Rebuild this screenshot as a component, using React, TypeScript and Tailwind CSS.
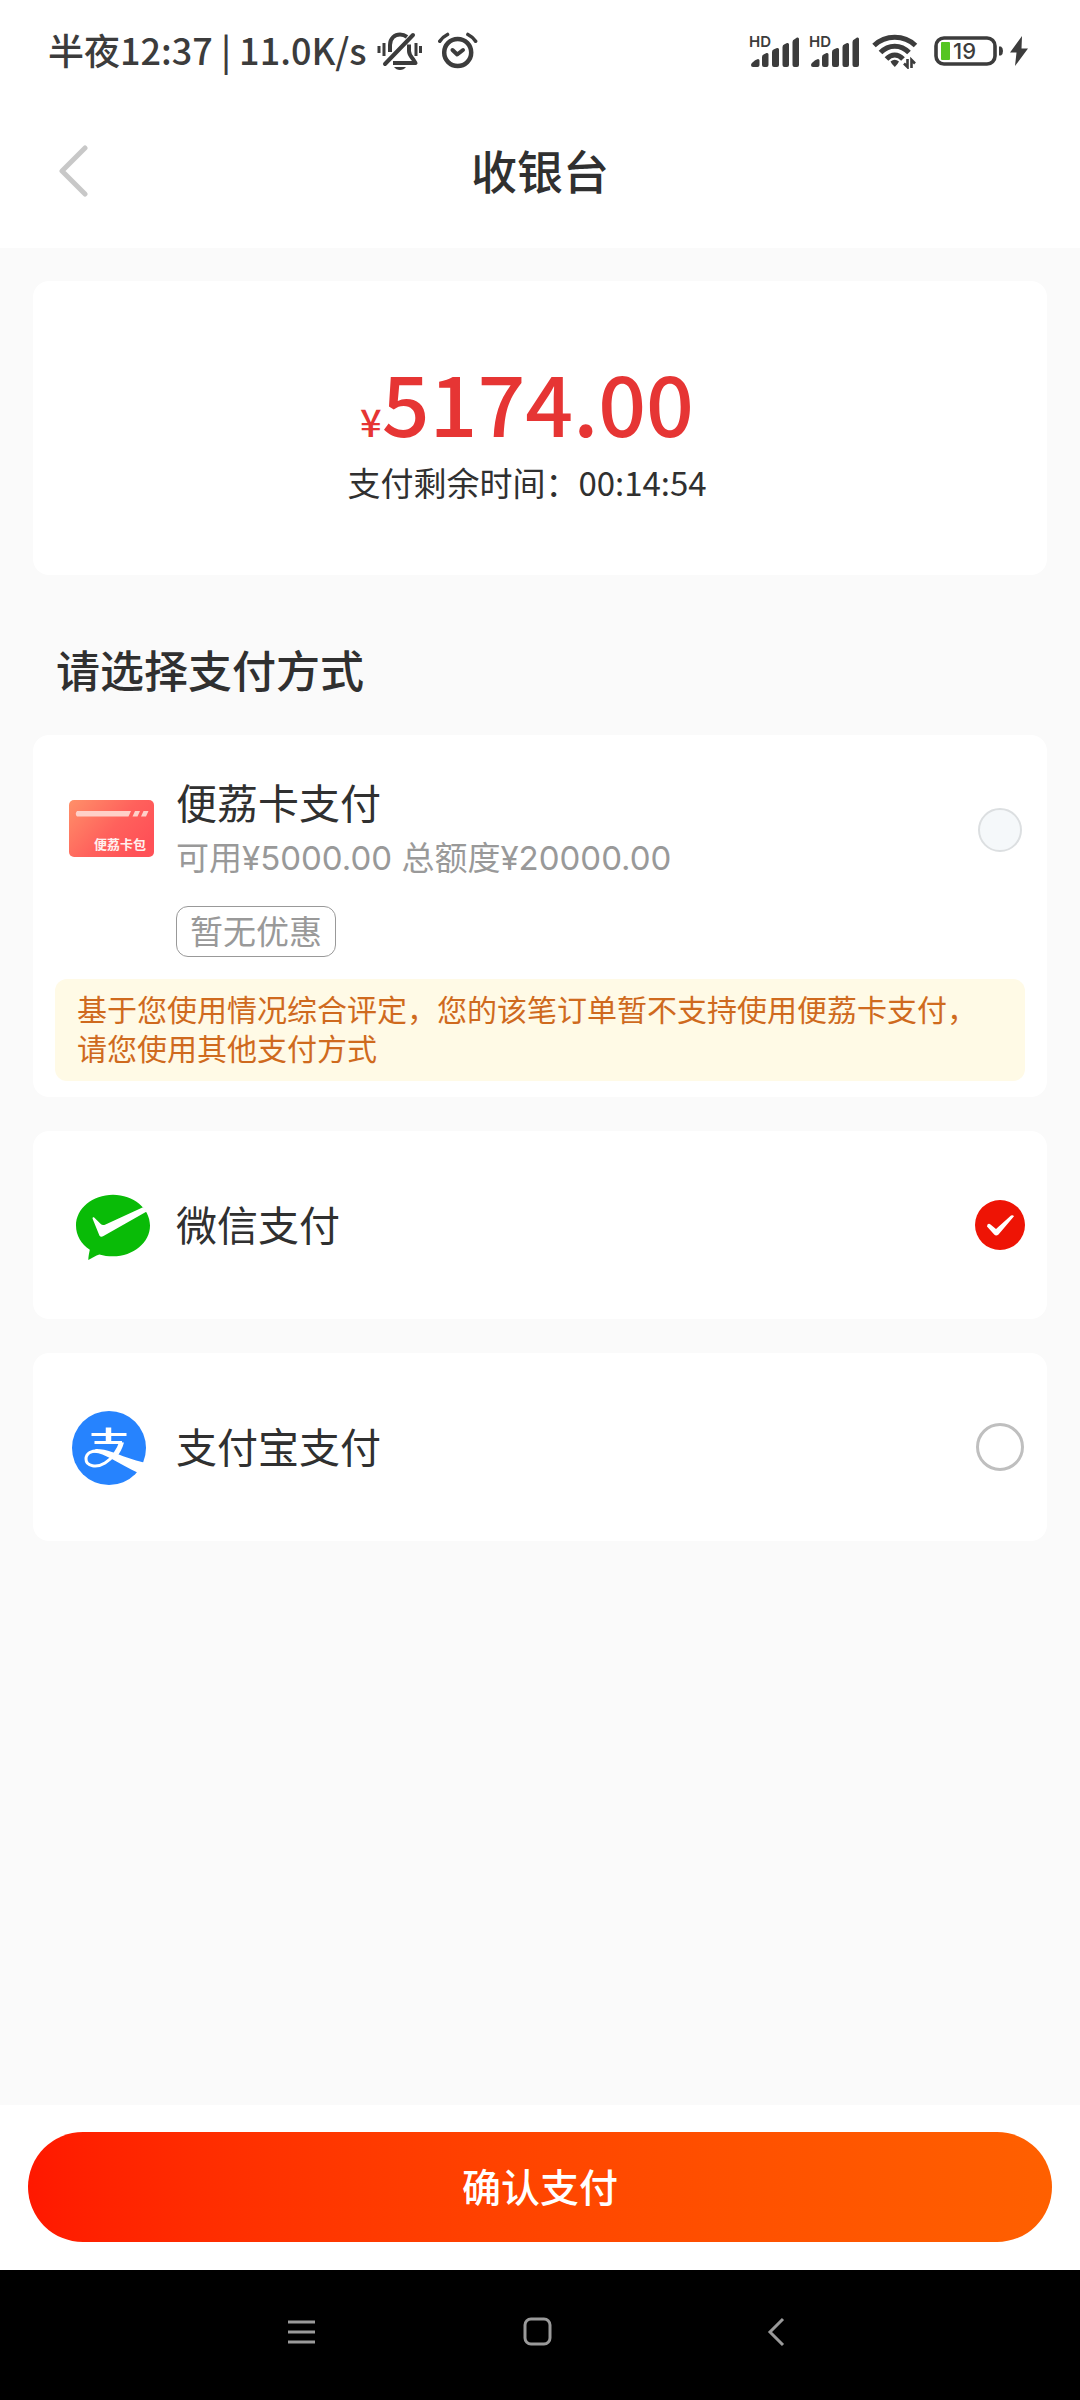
import { useState } from "react";
import type { ReactNode } from "react";

const BellOffIcon = () => (
  <svg width="45" height="38" viewBox="0 0 45 38" fill="none" stroke="currentColor" strokeWidth="4" aria-hidden="true">
    <path d="M13 20V13C13 6 18 2.5 23 2.5c3 0 5 .8 7 2.3" />
    <path d="M32 12.5V19c0 3.500 2 5.500 4 8l2.500 4H16" strokeLinejoin="round" />
    <path d="M8 32 36 3" strokeLinecap="round" />
    <path d="M2 14v7M7 11v13M39 11v13M43.500 14v7" strokeWidth="3" />
    <path d="M17 35h12c-1.500 2-3.500 3-6 3s-4.500-1-6-3z" fill="currentColor" stroke="none" />
  </svg>
);

const AlarmIcon = () => (
  <svg width="40" height="38" viewBox="0 0 40 38" fill="none" stroke="currentColor" strokeLinecap="round" aria-hidden="true">
    <circle cx="19.700" cy="20.500" r="13.500" strokeWidth="4.500" />
    <path d="m14.500 18 4.700 4.500 5.800-4.500" strokeWidth="4" strokeLinejoin="round" />
    <path d="M1.800 9.200C4 6 6.500 4 9.500 2.500M29.900 2.500c3 1.500 5.500 3.500 7.700 6.700" strokeWidth="3.600" />
  </svg>
);

const SignalIcon = () => (
  <svg width="50" height="34" viewBox="0 0 50 34" className="overflow-visible" fill="currentColor" aria-hidden="true">
    <text x="0" y="13" fontFamily="Inter, sans-serif" fontSize="15" fontWeight="600">
      HD
    </text>
    <path d="M2 31c0-2 4-5 7-6q1.500 0 1.500 1.500V31q0 2-2 2H4q-2 0-2-2z" />
    <path d="M13 23q0-2 2-2.800l2.500-1.200q2-.5 2 1.500V31q0 2-2 2H15q-2 0-2-2z" />
    <path d="M23 18q0-2 2-2.800l3-1.200q2-.5 2 1.500V31q0 2-2 2h-3q-2 0-2-2z" />
    <path d="M33.500 13q0-2 2-2.800l2.500-1.200q2-.5 2 1.500V31q0 2-2 2h-2.500q-2 0-2-2z" />
    <path d="M43.500 8q0-2 2-2.800L48 3.500q2-.5 2 1.500V31q0 2-2 2h-2.500q-2 0-2-2z" />
  </svg>
);

const WifiIcon = () => (
  <svg width="46" height="36" viewBox="0 0 46 36" fill="none" stroke="currentColor" strokeWidth="5" aria-hidden="true">
    <path d="M2 12.500C13.500 1.500 32 1.500 43.500 12.500" />
    <path d="M8.500 19.500c8-8.500 20.500-8.500 28.500 0" />
    <path d="M14.500 26c5-5.500 11.500-5.500 16.500 0" />
    <path d="M18.500 28.500q4.200-3.500 8.500 0-1.500 3-4.200 5.500-3-2.500-4.300-5.500z" fill="currentColor" stroke="none" />
    <path d="M35.500 26v8l-3.500-3.500M39.500 35v-8l3.500 3.500" strokeWidth="2.600" />
  </svg>
);

const BatteryIcon = () => (
  <svg width="70" height="30" viewBox="0 0 70 30" aria-hidden="true">
    <rect x="2" y="2" width="59" height="26" rx="8" fill="none" stroke="currentColor" strokeWidth="3.600" />
    <rect x="7" y="6" width="9" height="18" rx="1" fill="#55c522" />
    <text x="19" y="23" fill="currentColor" fontFamily="Inter, sans-serif" fontSize="22" fontWeight="500">
      19
    </text>
    <path d="M65 10.500h2q2 1 2 4.500t-2 4.500h-2z" fill="currentColor" />
  </svg>
);

const BoltIcon = () => (
  <svg width="18" height="30" viewBox="0 0 18 30" fill="currentColor" aria-hidden="true">
    <path d="M12 0 0 16.500h6.500L5 30 18 12.500h-6.500z" />
  </svg>
);

const StatusBar = () => (
  <div className="flex h-[102px] items-center justify-between pr-[52px] pl-12 text-[#3c3c3c]">
    <div className="flex items-center">
      <span className="pb-1 text-[36px] leading-[44px] font-medium whitespace-nowrap">
        半夜12:37 | 11.0K/s
      </span>
      <span className="ml-[10px] flex items-center gap-4">
        <BellOffIcon />
        <AlarmIcon />
      </span>
    </div>
    <div className="flex items-center">
      <div className="flex gap-[10px]">
        <SignalIcon />
        <SignalIcon />
      </div>
      <div className="ml-[13px] flex items-center gap-4">
        <WifiIcon />
        <div className="flex items-center gap-[6px]">
          <BatteryIcon />
          <BoltIcon />
        </div>
      </div>
    </div>
  </div>
);

const Header = () => (
  <header className="grid h-[138px] grid-cols-[1fr_auto_1fr] items-center px-[58px]">
    <button type="button" aria-label="返回" className="justify-self-start">
      <svg width="30" height="52" viewBox="0 0 30 52" fill="none" stroke="#c8c8c8" strokeWidth="5" strokeLinecap="round" strokeLinejoin="round">
        <path d="M27 3 4 26l23 23" />
      </svg>
    </button>
    <h1 className="pb-1 text-[46px] leading-[60px] font-medium">收银台</h1>
  </header>
);

const CardLogo = () => (
  <svg width="86" height="86" viewBox="0 0 86 86" aria-hidden="true">
    <defs>
      <linearGradient id="card" x1="0" y1="0" x2="1" y2="0.600">
        <stop offset="0" stopColor="#ff9069" />
        <stop offset="0.600" stopColor="#ff615c" />
        <stop offset="1" stopColor="#ff5157" />
      </linearGradient>
    </defs>
    <rect y="13" width="85" height="57" rx="5" fill="url(#card)" />
    <path d="M8 24h54L59.500 29.500H8q-2.500-2.700 0-5.500zM66 24h5L68.500 29.500h-5zM74.500 24h5L77 29.500h-5z" fill="#ffd0c8" />
    <text x="25" y="62" fill="#fff0ee" fontFamily="'Noto Sans CJK SC', sans-serif" fontSize="13" fontWeight="700">
      便荔卡包
    </text>
  </svg>
);

const WechatLogo = () => (
  <svg width="86" height="86" viewBox="0 0 86 86" aria-hidden="true">
    <path
      d="M44 12.700c20.500 0 37 13.800 37 30.800s-16.500 30.800-37 30.800c-4.800 0-9.400-.6-13.600-1.900-3.900 1.300-7.400 3.300-11.100 5.600.1-3.600.8-6.800 1.500-10.200C12.200 62.200 7 53.500 7 43.500c0-17 16.500-30.800 37-30.800z"
      fill="#09bb07"
    />
    <path
      d="M23.700 37c-.5-1.800.5-2 1.500-1.500l6.300 6.300c1.500 1.400 3 1.500 5 .6L74 25.300c1.500 1.200 2.600 2.500 3.700 4.200L34.500 54c-1.800 1-3.300 1-4.200-.8z"
      fill="#fff"
    />
  </svg>
);

const AlipayLogo = () => (
  <svg width="86" height="86" viewBox="0 0 86 86" fill="none" stroke="#fff" aria-hidden="true">
    <circle cx="40" cy="44" r="37" fill="#2683fe" stroke="none" />
    <path d="M22.500 30.500h35M25.500 38.500H53" strokeWidth="3" />
    <path d="M39.500 23.500v15" strokeWidth="5.500" />
    <path d="M52 37.500c-3 9-9 17-16 21.500-8 5-19 3.500-19-4 0-6 6-8.500 12-8.300" strokeWidth="3" />
    <path d="M27 45c11 0 21 5 31 8.500 6 2.200 12 4 19 5.500l-6.500 10.500C60 65 50 58.500 41 54 35 51 29 47.500 22 49z" fill="#fff" stroke="none" />
    <path d="M50.500 38.500h4.500c-1.500 6-4.500 11-7.500 15l-3.500-2c3-4 5.500-8.500 6.500-13z" fill="#fff" stroke="none" />
  </svg>
);

type MethodProps = {
  id: string;
  name: string;
  logo: ReactNode;
  selected: boolean;
  disabled?: boolean;
  detail?: string;
  onSelect?: () => void;
};

const Method = ({ id, name, logo, selected, disabled, detail, onSelect }: MethodProps) => (
  <div className="flex items-center gap-[21px]">
    {logo}
    <div className="flex-1 pb-1">
      <label htmlFor={id} className="block text-[41px] leading-[60px]">
        {name}
      </label>
      {detail && (
        <p className="font-['Inter','Noto_Sans_CJK_SC',sans-serif] text-[33px] leading-[54px] text-[#999]">
          {detail}
        </p>
      )}
    </div>
    <div className="relative flex w-[50px] items-center justify-center">
      <input
        id={id}
        type="radio"
        name="method"
        checked={selected}
        disabled={disabled}
        onChange={onSelect}
        className="size-12 appearance-none rounded-full border-3 border-[#bfbfbf] bg-white checked:size-[50px] checked:border-0 checked:bg-[#ee1405] disabled:size-11 disabled:border-2 disabled:border-[#dcdfe1] disabled:bg-[#f5f8fa]"
      />
      {selected && (
        <svg className="pointer-events-none absolute" width="28" height="24" viewBox="0 0 28 24" aria-hidden="true">
          <path d="M1.500 11.500q1.500-1.500 3 0l5.500 4.500L25 2.500q2-1 3 .8L12.500 21.500q-2.500 2-4.300 0L1 13.500z" fill="#fff" />
        </svg>
      )}
    </div>
  </div>
);

const others = [
  { id: "wechat", name: "微信支付", logo: <WechatLogo /> },
  { id: "alipay", name: "支付宝支付", logo: <AlipayLogo /> },
];

const SystemNav = () => (
  <nav className="grid grid-cols-3 bg-black px-[182px] py-[47px] text-[#9a9a9a]">
    <button type="button" aria-label="最近任务" className="justify-self-center">
      <svg width="36" height="36" viewBox="0 0 36 36" stroke="currentColor" strokeWidth="3">
        <path d="M5 5h27M5 15h27M5 25h27" />
      </svg>
    </button>
    <button type="button" aria-label="主屏幕" className="justify-self-center">
      <svg width="36" height="36" viewBox="0 0 36 36" fill="none" stroke="currentColor" strokeWidth="3">
        <rect x="3" y="2" width="25" height="25" rx="6" />
      </svg>
    </button>
    <button type="button" aria-label="返回" className="justify-self-center">
      <svg width="36" height="36" viewBox="0 0 36 36" fill="none" stroke="currentColor" strokeWidth="3">
        <path d="M22 2 9 15l13 13" />
      </svg>
    </button>
  </nav>
);

export default function App() {
  const [method, setMethod] = useState("wechat");

  return (
    <div className="flex min-h-screen flex-col bg-[#fafafa] font-['Noto_Sans_CJK_SC',sans-serif] text-[#303030]">
      <div className="bg-white pb-2">
        <StatusBar />
        <Header />
      </div>

      <main className="flex-1 px-[33px] pt-[33px]">
        <section className="rounded-2xl bg-white pt-[74px] pr-[26px] pb-[66px] text-center">
          <p className="mb-2 text-[84px] leading-[92px] font-medium text-[#e63534]">
            <span className="text-[38px] leading-none">¥</span>5174.00
          </p>
          <p className="text-[33px] leading-[54px]">
            支付剩余时间：<time>00:14:54</time>
          </p>
        </section>

        <h2 className="pt-[62px] pb-[34px] pl-[23px] text-[44px] leading-[64px] font-medium">
          请选择支付方式
        </h2>

        <div className="flex flex-col gap-[34px]">
          <section className="rounded-2xl bg-white px-[22px] pt-9 pb-4">
            <div className="pl-[14px]">
              <Method
                id="card-pay"
                name="便荔卡支付"
                logo={<CardLogo />}
                detail="可用¥5000.00 总额度¥20000.00"
                selected={false}
                disabled
              />
              <span className="mt-[17px] ml-[107px] inline-block rounded-xl border border-[#999] px-[13px] pb-[2px] text-[33px] leading-[47px] text-[#999]">
                暂无优惠
              </span>
            </div>
            <p className="mt-[22px] rounded-xl bg-[#fffae6] px-[22px] pt-[10px] pb-[14px] text-[30px] leading-[39px] text-[#cf6a1e]">
              基于您使用情况综合评定，您的该笔订单暂不支持使用便荔卡支付，请您使用其他支付方式
            </p>
          </section>

          {others.map(({ id, name, logo }) => (
            <section key={id} className="rounded-2xl bg-white py-[51px] pr-[22px] pl-9">
              <Method
                id={id}
                name={name}
                logo={logo}
                selected={method === id}
                onSelect={() => setMethod(id)}
              />
            </section>
          ))}
        </div>
      </main>

      <footer className="bg-white px-7 pt-[27px] pb-7">
        <button
          type="button"
          className="block w-full rounded-full bg-linear-to-r from-[#ff1800] to-[#ff6000] pb-1 text-[39px] leading-[106px] font-medium text-white"
        >
          确认支付
        </button>
      </footer>
      <SystemNav />
    </div>
  );
}
